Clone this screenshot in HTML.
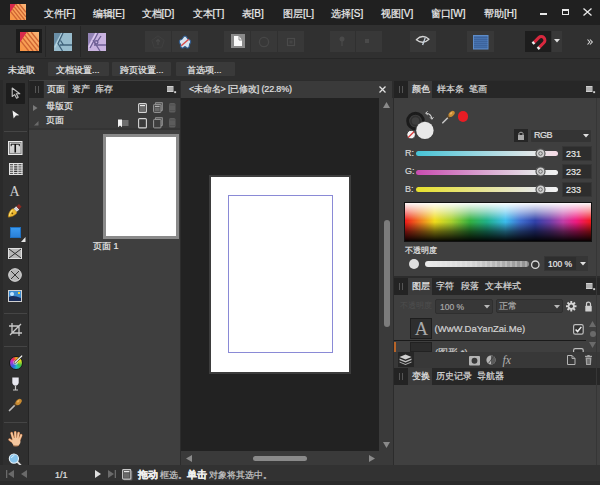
<!DOCTYPE html>
<html><head><meta charset="utf-8">
<style>
*{box-sizing:border-box;margin:0;padding:0}
html,body{width:600px;height:485px;overflow:hidden;background:#2b2b2b;font-family:"Liberation Sans",sans-serif;color:#d8d8d8;font-size:10px}
.a{position:absolute}
.t{position:absolute;white-space:nowrap;line-height:1;-webkit-text-stroke:0.2px currentColor}
svg{position:absolute;overflow:visible}
.mn{position:absolute;top:9px;font-size:10px;line-height:1;white-space:nowrap;color:#ececec;-webkit-text-stroke:0.2px currentColor}
.btn{position:absolute;background:#383838}
.cb{position:absolute;top:62px;height:14px;background:#3a3a3a;border-radius:1px}
.tab{position:absolute;font-size:8.5px;line-height:1;white-space:nowrap;color:#d8d8d8;-webkit-text-stroke:0.2px currentColor}
</style></head><body>
<!-- ================= MENU BAR ================= -->
<div class="a" style="left:0;top:0;width:600px;height:24.5px;background:#202020"></div>
<svg style="left:10px;top:4px;overflow:hidden" width="16" height="16" viewBox="0 0 19 19">
  <rect width="19" height="19" fill="url(#pg)"/>
  <polygon points="0,0 7,0 0,10.5" fill="#d82a4c"/>
  <g stroke="#cf6432" stroke-width="1.5">
    <line x1="11.1" y1="0" x2="19" y2="9.9"/><line x1="6.75" y1="0" x2="19" y2="15.4"/><line x1="4.9" y1="3.2" x2="17.5" y2="19"/><line x1="2.9" y1="6.2" x2="13.1" y2="19"/><line x1="0.9" y1="9.2" x2="8.7" y2="19"/>
  </g>
</svg>
<div class="mn" style="left:43.5px">文件[F]</div>
<div class="mn" style="left:92.5px">编辑[E]</div>
<div class="mn" style="left:141.5px">文档[D]</div>
<div class="mn" style="left:192.5px">文本[T]</div>
<div class="mn" style="left:241.5px">表[B]</div>
<div class="mn" style="left:283px">图层[L]</div>
<div class="mn" style="left:331px">选择[S]</div>
<div class="mn" style="left:381px">视图[V]</div>
<div class="mn" style="left:430.5px">窗口[W]</div>
<div class="mn" style="left:484px">帮助[H]</div>
<div class="a" style="left:540px;top:13px;width:7px;height:2px;background:#e8e8e8"></div>
<div class="a" style="left:562px;top:9px;width:7px;height:6px;border:1px solid #e8e8e8;border-top-width:2px"></div>
<svg style="left:583px;top:8px" width="9" height="8" viewBox="0 0 9 8"><path d="M0.5 0.5L8.5 7.5M8.5 0.5L0.5 7.5" stroke="#e8e8e8" stroke-width="1.3"/></svg>

<!-- ================= TOOLBAR ================= -->
<div class="a" style="left:0;top:24.5px;width:600px;height:34px;background:#303030"></div>
<div class="a" style="left:0;top:58px;width:600px;height:1px;background:#262626"></div>
<div class="a" style="left:16px;top:29px;width:26px;height:24px;background:#1c1c1c"></div>
<svg style="left:20px;top:32px;overflow:hidden" width="19" height="19" viewBox="0 0 19 19">
  <defs><linearGradient id="pg" x1="0" y1="1" x2="1" y2="0"><stop offset="0" stop-color="#f79342"/><stop offset="1" stop-color="#fbb476"/></linearGradient></defs>
  <rect width="19" height="19" fill="url(#pg)"/>
  <polygon points="0,0 7,0 0,10.5" fill="#d82a4c"/>
  <g stroke="#cf6432" stroke-width="1.35">
    <line x1="11.1" y1="0" x2="19" y2="9.9"/><line x1="6.75" y1="0" x2="19" y2="15.4"/><line x1="4.9" y1="3.2" x2="17.5" y2="19"/><line x1="2.9" y1="6.2" x2="13.1" y2="19"/><line x1="0.9" y1="9.2" x2="8.7" y2="19"/>
  </g>
</svg>
<svg style="left:54px;top:32.5px" width="18" height="18" viewBox="0 0 18 18">
  <rect width="18" height="18" fill="#98bccd"/>
  <polygon points="0,0 7,0 0,13" fill="#6a8fa7"/><path d="M8.2 0L0.8 14.5" stroke="#b8d6e2" stroke-width="1.2"/>
  <g stroke="#3f6179" stroke-width="1.3" fill="none">
    <path d="M9 0L4 10.5L8.5 18M6 12H18M6.5 7.5L9.5 12"/>
  </g>
</svg>
<svg style="left:88px;top:32.5px" width="18" height="18" viewBox="0 0 18 18">
  <rect width="18" height="18" fill="#c9b3e0"/>
  <polygon points="0,0 7,0 0,13" fill="#9484b6"/><path d="M8.2 0L0.8 14.5" stroke="#dccbee" stroke-width="1.2"/>
  <g stroke="#6e5f94" stroke-width="1.3" fill="none">
    <path d="M10 0L2 15M6 12H18M5 7L12 18M13 3L9 9"/>
    <circle cx="8.3" cy="9.3" r="1.6"/>
  </g>
</svg>
<div class="a" style="left:45px;top:26px;width:1px;height:31px;background:#262626"></div>
<div class="a" style="left:80px;top:26px;width:1px;height:31px;background:#262626"></div>
<!-- group1 -->
<div class="btn" style="left:145px;top:31px;width:26px;height:21px"></div>
<div class="btn" style="left:172px;top:31px;width:26px;height:21px"></div>
<svg style="left:151px;top:34.5px" width="14" height="14" viewBox="0 0 14 14"><path d="M7 0.8L13.2 5.3L10.8 12.8H3.2L0.8 5.3Z" fill="#393939" stroke="#404040" stroke-width="1"/><path d="M7 4.5V10M5 6.5L7 4.5L9 6.5" fill="none" stroke="#474747" stroke-width="1.1"/></svg>
<svg style="left:177.5px;top:34.5px" width="14" height="14" viewBox="0 0 14 14"><path d="M7 1C9 1 9 4 10.5 4.5C12.5 4.5 13.5 7 12 8.5C11 9.5 12 12.5 10 13C8.5 13.5 7.5 11.5 7 11.5C6.5 11.5 5.5 13.5 4 13C2 12.5 3 9.5 2 8.5C0.5 7 1.5 4.5 3.5 4.5C5 4 5 1 7 1Z" fill="#d6e4f0" stroke="#2f5a8e" stroke-width="1.1"/><path d="M3.2 10.8L10.8 4.2" stroke="#d84a48" stroke-width="1.5"/></svg>
<!-- group2 -->
<div class="btn" style="left:224px;top:31px;width:26px;height:21px"></div>
<div class="btn" style="left:251px;top:31px;width:26px;height:21px"></div>
<div class="btn" style="left:278px;top:31px;width:26px;height:21px"></div>
<div class="a" style="left:231px;top:34px;width:14px;height:14px;background:#8a8a8a"></div>
<svg style="left:233px;top:35px" width="10" height="12" viewBox="0 0 10 12"><path d="M1 1H6L9 5V11H1Z" fill="#fafafa"/><path d="M6 1V5H9" fill="none" stroke="#777" stroke-width="0.8"/></svg>
<svg style="left:258px;top:36px" width="12" height="12" viewBox="0 0 12 12"><circle cx="6" cy="6" r="4.6" fill="none" stroke="#474747" stroke-width="1.3"/></svg>
<svg style="left:285px;top:36px" width="12" height="12" viewBox="0 0 12 12"><rect x="2.5" y="2.5" width="7" height="7" fill="none" stroke="#4a4a4a" stroke-width="1.2"/><rect x="4.5" y="4.5" width="3" height="3" fill="#444"/></svg>
<!-- group3 -->
<div class="btn" style="left:330px;top:31px;width:25px;height:21px"></div>
<div class="btn" style="left:356px;top:31px;width:26px;height:21px"></div>
<svg style="left:337px;top:35px" width="10" height="12" viewBox="0 0 10 12"><circle cx="5" cy="4" r="2.5" fill="#4a4a4a"/><path d="M5 6V11" stroke="#4a4a4a" stroke-width="1.2"/></svg>
<div class="a" style="left:365px;top:39px;width:4px;height:4px;background:#4a4a4a"></div>
<!-- group4 eye -->
<div class="btn" style="left:410px;top:31px;width:26px;height:21px"></div>
<svg style="left:414px;top:33px" width="18" height="14" viewBox="0 0 18 14"><path d="M2.3 6.8Q8.5 0.6 15 6.2Q9 12 2.3 6.8Z" fill="none" stroke="#d4d4d4" stroke-width="1.3" stroke-linejoin="round"/><path d="M11.3 4.6L8.6 12" stroke="#c8d4e0" stroke-width="1.3"/></svg>
<!-- grid -->
<div class="btn" style="left:467px;top:31px;width:27px;height:21px"></div>
<svg style="left:472.5px;top:34.5px" width="15.5" height="14.5" viewBox="0 0 15.5 14.5"><rect x="0.5" y="0.5" width="14.5" height="13.5" fill="#4671ad" stroke="#5e8cc8"/><g stroke="#375d92" stroke-width="0.6"><path d="M1 2.5H14.5M1 4.5H14.5M1 6.5H14.5M1 8.5H14.5M1 10.5H14.5M1 12.3H14.5"/></g></svg>
<!-- magnet -->
<div class="a" style="left:525px;top:31px;width:26px;height:21px;background:#1d1d1d"></div>
<div class="btn" style="left:552px;top:31px;width:10px;height:21px"></div>
<svg style="left:528px;top:32px" width="20" height="20" viewBox="0 0 20 20"><g transform="translate(13.3 8.2) rotate(45)"><path d="M-3.6 6.6V0A3.6 3.6 0 0 1 3.6 0V6.6" fill="none" stroke="#d8283e" stroke-width="3"/><path d="M-3.6 6.4V8.6M3.6 6.4V8.6" stroke="#eeeeee" stroke-width="3"/></g></svg>
<svg style="left:554px;top:39px" width="6" height="4" viewBox="0 0 6 4"><path d="M0 0H6L3 3.5Z" fill="#e0e0e0"/></svg>
<svg style="left:587px;top:38.5px" width="6" height="6" viewBox="0 0 6 6"><path d="M0.5 0.5L2.8 3L0.5 5.5M3 0.5L5.3 3L3 5.5" fill="none" stroke="#d8d8d8" stroke-width="1.1"/></svg>

<!-- ================= CONTEXT BAR ================= -->
<div class="a" style="left:0;top:59px;width:600px;height:21px;background:#2e2e2e"></div>
<div class="a" style="left:0;top:80px;width:600px;height:1px;background:#222"></div>
<div class="t" style="left:8px;top:65.5px;font-size:9px;color:#e6e6e6">未选取</div>
<div class="cb" style="left:48px;width:61px"></div>
<div class="t" style="left:56px;top:65.5px;font-size:9px;color:#e6e6e6">文档设置...</div>
<div class="cb" style="left:112px;width:59px"></div>
<div class="t" style="left:120px;top:65.5px;font-size:9px;color:#e6e6e6">跨页设置...</div>
<div class="cb" style="left:176px;width:59px"></div>
<div class="t" style="left:187px;top:65.5px;font-size:9px;color:#e6e6e6">首选项...</div>


<!-- ================= LEFT TOOLS ================= -->
<div class="a" style="left:0;top:80px;width:29px;height:385px;background:#2a2a2a"></div>
<div class="a" style="left:3px;top:80px;width:25px;height:385px;background:#2f2f2f"></div>
<div class="a" style="left:28px;top:80px;width:1.5px;height:385px;background:#252525"></div>
<div class="a" style="left:5.5px;top:83px;width:19.5px;height:20.5px;background:#1d1d1d;border-radius:1px"></div>
<svg style="left:11px;top:87px" width="10" height="12" viewBox="0 0 10 12"><path d="M1.2 1V9.5L3.6 7.6L5.6 11.2L7.2 10.3L5.3 6.8H8.8Z" fill="#1d1d1d" stroke="#c4c4c4" stroke-width="1.1" stroke-linejoin="round"/></svg>
<svg style="left:12px;top:110px" width="8" height="9" viewBox="0 0 8 9"><path d="M0.5 0.5L7.3 5.3L4 5.6L1.6 8.6Z" fill="#f2f2f2"/></svg>
<div class="a" style="left:4px;top:131px;width:23px;height:1px;background:#454545"></div>
<!-- text frame -->
<svg style="left:8px;top:141px" width="14.5" height="14" viewBox="0 0 14.5 14"><defs><linearGradient id="tg" x1="0" y1="0" x2="0" y2="1"><stop offset="0" stop-color="#e6e6e6"/><stop offset="1" stop-color="#c4c4c4"/></linearGradient></defs><rect x="0.5" y="0.5" width="13.5" height="13" fill="url(#tg)" stroke="#e8e8e8"/><rect x="1.5" y="1.5" width="11.5" height="11" fill="none" stroke="#808080" stroke-width="0.9"/><path d="M3 3.2H11.5M3.2 3V5.2M11.3 3V5.2" stroke="#1a1a1a" stroke-width="1"/><path d="M7.25 3V11.5" stroke="#111" stroke-width="1.6"/></svg>
<!-- table -->
<svg style="left:8.5px;top:163px" width="13.5" height="12" viewBox="0 0 13.5 12"><rect x="0" y="0" width="13.5" height="12" fill="#5a5a5a"/><rect x="4.6" y="3" width="4.3" height="6" fill="#222"/><g stroke="#e4e4e4" stroke-width="1"><path d="M0.5 0V12M4.6 0V12M8.9 0V12M13 0V12M0 0.5H13.5M0 2.8H13.5M0 5H13.5M0 7.2H13.5M0 9.4H13.5M0 11.5H13.5"/></g></svg>
<!-- artistic text -->
<div class="t" style="left:9.5px;top:184.5px;font-family:'Liberation Serif',serif;font-size:14px;color:#d0d0d0;-webkit-text-stroke:0">A</div>
<!-- pen -->
<svg style="left:4px;top:200px" width="22" height="20" viewBox="0 0 22 20"><g transform="translate(4.2 17.1) rotate(-44)">
 <path d="M0 0Q3 -3.4 8.2 -3.3L9.8 -2.4V2.4L8.2 3.3Q3 3.4 0 0Z" fill="#ecb832" stroke="#9a6a14" stroke-width="0.5"/>
 <path d="M1.5 -0.2Q4.5 -2.2 8 -2.2" stroke="#fde47a" stroke-width="1" fill="none"/>
 <circle cx="5.6" cy="0.2" r="0.9" fill="#6a4a08"/>
 <rect x="9.8" y="-2.2" width="3.4" height="4.4" fill="#f2f2f2"/>
 <path d="M10.9 -2.2V2.2M12.1 -2.2V2.2" stroke="#999" stroke-width="0.5"/>
 <rect x="13.2" y="-1.9" width="3.6" height="3.8" fill="#8a2a22"/>
</g></svg>
<!-- rect -->
<div class="a" style="left:10px;top:227px;width:11px;height:11px;background:linear-gradient(#3a9af0,#2a80d8);border:1px solid #2070c0"></div>
<svg style="left:20.5px;top:237px" width="4.5" height="5" viewBox="0 0 4.5 5"><path d="M4.5 0V5H0Z" fill="#e6e6e6"/></svg>
<!-- picture frame -->
<svg style="left:8px;top:248px" width="14" height="11" viewBox="0 0 14 11"><rect x="0.5" y="0.5" width="13" height="10" fill="#b8b8b8" stroke="#e0e0e0"/><path d="M1 1L13 10M13 1L1 10" stroke="#333" stroke-width="1"/></svg>
<!-- ellipse frame -->
<svg style="left:8px;top:268px" width="14" height="14" viewBox="0 0 14 14"><circle cx="7" cy="7" r="6.3" fill="#b5b5b5" stroke="#dedede" stroke-width="1"/><path d="M3 3L11 11M11 3L3 11" stroke="#333" stroke-width="1"/></svg>
<!-- image -->
<svg style="left:8px;top:290px" width="14" height="12" viewBox="0 0 14 12"><rect x="0.5" y="0.5" width="13" height="11" fill="#3a8ad0" stroke="#d0d0d0"/><path d="M1 7C4 5 8 6 13 8V11H1Z" fill="#1a2d5a"/><circle cx="4" cy="4" r="2" fill="#bfe3ff"/><rect x="10" y="2" width="2" height="2" fill="#f0d040"/></svg>
<div class="a" style="left:4px;top:313px;width:23px;height:1px;background:#454545"></div>
<!-- crop -->
<svg style="left:9px;top:323px" width="14" height="13" viewBox="0 0 14 13"><path d="M3 0V10H13M0 3H10V13M1 12L12 1" fill="none" stroke="#c8c8c8" stroke-width="1.3"/></svg>
<div class="a" style="left:4px;top:346px;width:23px;height:1px;background:#454545"></div>
<!-- color wheel -->
<div class="a" style="left:8.5px;top:355.5px;width:14px;height:14px;border-radius:50%;background:conic-gradient(from 0deg,#f0a020,#e8e020 60deg,#40c040 120deg,#20c0c0 170deg,#3060e0 220deg,#c030d0 290deg,#f03050 330deg,#f0a020);border:1px solid #1a1a1a"></div>
<div class="a" style="left:13px;top:360px;width:5px;height:5px;border-radius:50%;background:radial-gradient(#e8e8e8,rgba(230,230,230,0.2))"></div>
<svg style="left:13px;top:355px" width="10" height="10" viewBox="0 0 10 10"><path d="M2 7.5L8.8 1" stroke="#222" stroke-width="2.4" stroke-linecap="round"/><path d="M2 7.5L8.8 1" stroke="#f2f2f2" stroke-width="1.2" stroke-linecap="round"/></svg>
<!-- transparency glass -->
<svg style="left:11.5px;top:377px" width="7" height="14" viewBox="0 0 7 14"><path d="M0.3 0.5H6.7V5.5C6.7 7.6 5.2 8.6 3.5 8.6C1.8 8.6 0.3 7.6 0.3 5.5Z" fill="#e8e8f0"/><path d="M3.5 8.6V12.6M1 13H6" stroke="#c8c8c8" stroke-width="1.2"/></svg>
<!-- eyedropper -->
<svg style="left:8px;top:398px" width="15" height="14" viewBox="0 0 15 14"><path d="M1.5 12.5L7.5 6.5" stroke="#bdbdbd" stroke-width="1.7" stroke-linecap="round"/><path d="M6 5.6L8.4 8" stroke="#5a4020" stroke-width="1.5"/><ellipse cx="10.6" cy="3.9" rx="3.6" ry="2.5" transform="rotate(-45 10.6 3.9)" fill="#c88a30"/><ellipse cx="10.2" cy="3.3" rx="1.5" ry="0.9" transform="rotate(-45 10.2 3.3)" fill="#e8b060"/></svg>
<div class="a" style="left:4px;top:422px;width:23px;height:1px;background:#454545"></div>
<!-- hand -->
<svg style="left:8px;top:431px" width="15" height="16" viewBox="0 0 15 16">
 <g stroke="#c87a48" stroke-width="2.6" stroke-linecap="round" fill="none">
  <path d="M5.5 8.5L3.6 2.2"/><path d="M7.6 8L7.2 1.4"/><path d="M9.6 8.2L10.6 2"/><path d="M11.2 9L13.2 4.2"/><path d="M5 11L1.6 8.6"/>
 </g>
 <g stroke="#f4c69e" stroke-width="1.7" stroke-linecap="round" fill="none">
  <path d="M5.5 8.5L3.6 2.2"/><path d="M7.6 8L7.2 1.4"/><path d="M9.6 8.2L10.6 2"/><path d="M11.2 9L13.2 4.2"/><path d="M5 11L1.6 8.6"/>
 </g>
 <ellipse cx="8.2" cy="10.8" rx="4.3" ry="4" fill="#f4c69e"/>
 <path d="M5 14.5C6.5 15.3 9.5 15.3 11 14.2" stroke="#d08a58" stroke-width="0.8" fill="none"/>
</svg>
<!-- zoom -->
<svg style="left:8px;top:453px" width="14" height="13" viewBox="0 0 14 13"><path d="M9 8.5L12.8 12.3" stroke="#d8d8d8" stroke-width="1.8" stroke-linecap="round"/><circle cx="5.9" cy="5.6" r="4.6" fill="#86c4ec" stroke="#e6f2fa" stroke-width="1.1"/><path d="M3.5 5C3.8 3.6 5 2.7 6.3 2.7" stroke="#e8f6ff" stroke-width="1" fill="none"/></svg>

<!-- ================= PAGES PANEL ================= -->
<div class="a" style="left:29px;top:80px;width:151px;height:385px;background:#3f3f3f"></div>
<div class="a" style="left:29px;top:81px;width:151px;height:17px;background:#272727"></div>
<div class="a" style="left:30px;top:81px;width:13px;height:17px;background:#232323"></div>
<div class="a" style="left:35px;top:86px;width:1px;height:7px;background:#555"></div>
<div class="a" style="left:38px;top:86px;width:1px;height:7px;background:#555"></div>
<div class="a" style="left:44px;top:81px;width:24px;height:17px;background:#3b3b3b"></div>
<div class="tab" style="left:46.5px;top:85px;color:#e8e8e8">页面</div>
<div class="tab" style="left:71.5px;top:85px">资产</div>
<div class="tab" style="left:95px;top:85px;letter-spacing:0.3px">库存</div>
<svg style="left:167px;top:86px" width="10" height="9" viewBox="0 0 10 9"><rect x="0" y="0" width="6.5" height="6" fill="#d0d0d0"/><path d="M0 2H6.5M0 4H6.5" stroke="#666" stroke-width="0.6"/><rect x="7.2" y="5.2" width="1.9" height="1.9" fill="#d0d0d0"/></svg>
<div class="a" style="left:29px;top:98px;width:151px;height:30px;background:#3a3a3a"></div>
<div class="a" style="left:29px;top:128px;width:151px;height:1.5px;background:#343434"></div>
<svg style="left:33px;top:104.5px" width="4.5" height="6" viewBox="0 0 4.5 6"><path d="M0 0L4.5 3L0 6Z" fill="#7a7a7a"/></svg>
<svg style="left:33.5px;top:121px" width="4.5" height="4.5" viewBox="0 0 4.5 4.5"><path d="M4.5 0V4.5H0Z" fill="#6a6a6a"/></svg>
<div class="t" style="left:45.5px;top:101.5px;font-size:9px;color:#e6e6e6">母版页</div>
<div class="t" style="left:45.5px;top:116px;font-size:9px;color:#e6e6e6">页面</div>
<!-- row icons -->
<svg style="left:137.5px;top:102.5px" width="9" height="10" viewBox="0 0 9 10"><rect x="0.6" y="0.6" width="7.8" height="8.8" rx="1" fill="#4a4a4a" stroke="#d4d4d4" stroke-width="1.1"/><rect x="2" y="2" width="5" height="1.3" fill="#e8e8e8"/><rect x="2" y="4" width="5" height="4" fill="#6a6a6a"/></svg>
<svg style="left:153px;top:101.5px" width="10" height="11" viewBox="0 0 10 11"><path d="M2.5 2V0.6H9.4V8.5H8" fill="#555" stroke="#8a8a8a" stroke-width="1"/><rect x="0.6" y="2.4" width="7.4" height="8" rx="0.8" fill="#4a4a4a" stroke="#9a9a9a" stroke-width="1"/><rect x="2" y="3.8" width="4.6" height="1.2" fill="#b0b0b0"/><rect x="2" y="5.6" width="4.6" height="3.4" fill="#6a6a6a"/></svg>
<svg style="left:169px;top:102.5px" width="6.5" height="9.5" viewBox="0 0 6.5 9.5"><rect x="0" y="0" width="6.5" height="9.5" rx="1.6" fill="#5c5c5c"/><path d="M0.5 2H6M0.5 7.5H6" stroke="#4a4a4a" stroke-width="0.6"/></svg>
<svg style="left:116.5px;top:118.5px" width="12" height="8.5" viewBox="0 0 12 8.5"><rect x="5" y="1" width="6.5" height="6" fill="#6e6e6e"/><path d="M1 0.5H5V8.2L3 6.5L1 8.2Z" fill="#f2f2f2"/></svg>
<svg style="left:137.5px;top:117.5px" width="9" height="10.5" viewBox="0 0 9 10.5"><rect x="0.6" y="0.6" width="7.8" height="9.3" rx="1" fill="#3a3a3a" stroke="#d4d4d4" stroke-width="1.1"/></svg>
<svg style="left:153px;top:116.5px" width="10" height="11.5" viewBox="0 0 10 11.5"><path d="M2.5 2V0.6H9.4V8.5H8" fill="#555" stroke="#8a8a8a" stroke-width="1"/><rect x="0.6" y="2.4" width="7.4" height="8.5" rx="0.8" fill="#3e3e3e" stroke="#9a9a9a" stroke-width="1"/></svg>
<svg style="left:169px;top:117.5px" width="6.5" height="9.5" viewBox="0 0 6.5 9.5"><rect x="0" y="0" width="6.5" height="9.5" rx="1.6" fill="#5c5c5c"/><path d="M0.5 2H6M0.5 7.5H6" stroke="#4a4a4a" stroke-width="0.6"/></svg>
<!-- thumbnail -->
<div class="a" style="left:103px;top:134px;width:76px;height:105px;background:#8a8a8a"></div>
<div class="a" style="left:106px;top:137px;width:70px;height:99px;background:#ffffff"></div>
<div class="t" style="left:93px;top:241.5px;font-size:9px;color:#e6e6e6">页面 1</div>


<!-- ================= CANVAS ================= -->
<div class="a" style="left:180px;top:80px;width:213px;height:385px;background:#2c2c2c"></div>
<div class="a" style="left:181px;top:81px;width:211px;height:17px;background:#3a3a3a"></div>
<div class="t" style="left:189px;top:85px;font-size:9px;letter-spacing:-0.17px;color:#e0e0e0">&lt;未命名&gt; [已修改] (22.8%)</div>
<svg style="left:379px;top:86px" width="7" height="7" viewBox="0 0 7 7"><path d="M0.5 0.5L6.5 6.5M6.5 0.5L0.5 6.5" stroke="#e0e0e0" stroke-width="1.3"/></svg>
<div class="a" style="left:181px;top:98px;width:198px;height:353px;background:#222222"></div>
<!-- vscroll -->
<div class="a" style="left:379px;top:98px;width:14px;height:367px;background:#3a3a3a"></div>
<svg style="left:383px;top:102px" width="7" height="6" viewBox="0 0 7 6"><path d="M3.5 0L7 6H0Z" fill="#8a8a8a"/></svg>
<svg style="left:383px;top:442px" width="7" height="6" viewBox="0 0 7 6"><path d="M0 0H7L3.5 6Z" fill="#8a8a8a"/></svg>
<div class="a" style="left:383.5px;top:220px;width:6px;height:107px;background:#7c7c7c;border-radius:3px"></div>
<!-- hscroll -->
<div class="a" style="left:181px;top:451px;width:198px;height:14px;background:#3a3a3a"></div>
<svg style="left:186px;top:455px" width="6" height="7" viewBox="0 0 6 7"><path d="M6 0V7L0 3.5Z" fill="#8a8a8a"/></svg>
<svg style="left:369px;top:455px" width="6" height="7" viewBox="0 0 6 7"><path d="M0 0V7L6 3.5Z" fill="#8a8a8a"/></svg>
<div class="a" style="left:253px;top:456px;width:54px;height:5px;background:#8a8a8a;border-radius:3px"></div>
<!-- page -->
<div class="a" style="left:209px;top:175px;width:142px;height:199px;background:#3d3d3d"></div>
<div class="a" style="left:211px;top:177px;width:138px;height:195px;background:#ffffff"></div>
<div class="a" style="left:228px;top:195px;width:105px;height:158px;border:1px solid #8a8ad6"></div>

<!-- ================= RIGHT PANEL ================= -->
<div class="a" style="left:393px;top:80px;width:207px;height:385px;background:#2c2c2c"></div>
<div class="a" style="left:394px;top:98px;width:206px;height:178px;background:#3f3f3f"></div>
<div class="a" style="left:394px;top:81px;width:206px;height:17px;background:#272727"></div>
<div class="a" style="left:394px;top:81px;width:14px;height:17px;background:#232323"></div>
<div class="a" style="left:399px;top:86px;width:1px;height:7px;background:#555"></div>
<div class="a" style="left:402px;top:86px;width:1px;height:7px;background:#555"></div>
<div class="a" style="left:408px;top:81px;width:24px;height:17px;background:#3b3b3b"></div>
<div class="tab" style="left:411.5px;top:85px;color:#e8e8e8">颜色</div>
<div class="tab" style="left:436.5px;top:85px">样本条</div>
<div class="tab" style="left:469px;top:85px">笔画</div>
<svg style="left:586.2px;top:85.5px" width="10" height="9" viewBox="0 0 10 9"><rect x="0" y="0" width="6.5" height="6" fill="#d0d0d0"/><path d="M0 2H6.5M0 4H6.5" stroke="#666" stroke-width="0.6"/><rect x="7.2" y="5.2" width="1.9" height="1.9" fill="#d0d0d0"/></svg>
<!-- color wells -->
<svg style="left:400px;top:104px" width="40" height="40" viewBox="0 0 40 40">
  <circle cx="15.5" cy="17" r="7.8" fill="none" stroke="#1b1b1b" stroke-width="3"/>
  <circle cx="15.5" cy="17" r="4.6" fill="none" stroke="#303030" stroke-width="1.6"/>
  <circle cx="24.9" cy="26.4" r="9.6" fill="#3f3f3f"/>
  <circle cx="24.9" cy="26.4" r="8.7" fill="#e8e8e8"/>
  <circle cx="11.1" cy="30.6" r="4.3" fill="#f2f2f2" stroke="#262626" stroke-width="0.9"/>
  <path d="M8.2 33.5L14 27.7" stroke="#d83a3a" stroke-width="1.3"/>
  <path d="M26.3 9.2C29 9.2 31.5 11.5 31.8 14.6" fill="none" stroke="#cfcfcf" stroke-width="1.1"/>
  <path d="M25.6 9.2L27.6 7.4M25.6 9.2L27.8 10.9M31.9 15.3L30.1 13.4M31.9 15.3L33.4 13.2" stroke="#cfcfcf" stroke-width="1"/>
</svg>
<svg style="left:441px;top:109.5px" width="15" height="14" viewBox="0 0 15 14"><path d="M1.8 12.8L7.6 7" stroke="#c4c4c4" stroke-width="1.6" stroke-linecap="round"/><path d="M6.1 6L8.5 8.4" stroke="#5a4020" stroke-width="1.5"/><ellipse cx="10.6" cy="3.9" rx="3.6" ry="2.4" transform="rotate(-45 10.6 3.9)" fill="#c98c32"/><ellipse cx="10.1" cy="3.3" rx="1.5" ry="0.9" transform="rotate(-45 10.1 3.3)" fill="#e8b264"/></svg>
<div class="a" style="left:457.5px;top:111px;width:10.5px;height:10.5px;border-radius:50%;background:#e81c24"></div>
<!-- lock + dropdown -->
<div class="a" style="left:514px;top:129px;width:14px;height:13px;background:#262626"></div>
<svg style="left:517px;top:131px" width="8" height="9" viewBox="0 0 8 9"><path d="M2 4V2.5C2 0.8 6 0.8 6 2.5V4" fill="none" stroke="#a8a8a8" stroke-width="1"/><rect x="1" y="4" width="6" height="5" fill="#a8a8a8"/></svg>
<div class="a" style="left:531px;top:130px;width:60px;height:12px;background:#343434;border-radius:1px"></div>
<div class="t" style="left:534px;top:131px;font-size:9px;letter-spacing:-0.5px;color:#e0e0e0">RGB</div>
<svg style="left:583px;top:134px" width="6" height="4" viewBox="0 0 6 4"><path d="M0 0H6L3 3.5Z" fill="#e0e0e0"/></svg>
<!-- sliders -->
<div class="t" style="left:405px;top:149px;font-size:9px;color:#d8d8d8">R:</div>
<div class="t" style="left:405px;top:167px;font-size:9px;color:#d8d8d8">G:</div>
<div class="t" style="left:405px;top:185px;font-size:9px;color:#d8d8d8">B:</div>
<div class="a" style="left:416px;top:151px;width:142px;height:5px;border-radius:3px;background:linear-gradient(90deg,#46c3d6,#e7e8e9 85%,#f6d8e4)"></div>
<div class="a" style="left:416px;top:169.5px;width:142px;height:5px;border-radius:3px;background:linear-gradient(90deg,#c84cb0,#e7e8e9 85%,#f2f2f2)"></div>
<div class="a" style="left:416px;top:187px;width:142px;height:5px;border-radius:3px;background:linear-gradient(90deg,#e6e02a,#e7e8e9 85%,#f2f2f2)"></div>
<svg style="left:535px;top:148px" width="11" height="11" viewBox="0 0 11 11"><circle cx="5.5" cy="5.5" r="4.5" fill="#cfcfcf" stroke="#555" stroke-width="1.2"/><circle cx="5.5" cy="5.5" r="1.8" fill="none" stroke="#555" stroke-width="0.8"/></svg>
<svg style="left:535px;top:166px" width="11" height="11" viewBox="0 0 11 11"><circle cx="5.5" cy="5.5" r="4.5" fill="#cfcfcf" stroke="#555" stroke-width="1.2"/><circle cx="5.5" cy="5.5" r="1.8" fill="none" stroke="#555" stroke-width="0.8"/></svg>
<svg style="left:535px;top:184px" width="11" height="11" viewBox="0 0 11 11"><circle cx="5.5" cy="5.5" r="4.5" fill="#cfcfcf" stroke="#555" stroke-width="1.2"/><circle cx="5.5" cy="5.5" r="1.8" fill="none" stroke="#555" stroke-width="0.8"/></svg>
<div class="a" style="left:561.5px;top:146px;width:30.5px;height:14.5px;background:#2d2d2d;border:1px solid #363636"></div>
<div class="a" style="left:561.5px;top:164px;width:30.5px;height:14.5px;background:#2d2d2d;border:1px solid #363636"></div>
<div class="a" style="left:561.5px;top:182px;width:30.5px;height:14.5px;background:#2d2d2d;border:1px solid #363636"></div>
<div class="t" style="left:566px;top:150px;font-size:9px;color:#e8e8e8">231</div>
<div class="t" style="left:566px;top:168px;font-size:9px;color:#e8e8e8">232</div>
<div class="t" style="left:566px;top:186px;font-size:9px;color:#e8e8e8">233</div>
<!-- spectrum -->
<div class="a" style="left:404px;top:202px;width:188px;height:40px;background:#111"></div>
<div class="a" style="left:405px;top:203px;width:186px;height:38px;background:linear-gradient(180deg,rgba(255,255,255,0.97) 0%,rgba(255,255,255,0.55) 22%,rgba(255,255,255,0) 46%,rgba(0,0,0,0) 50%,rgba(0,0,0,0.55) 75%,rgba(0,0,0,0.96) 100%),linear-gradient(90deg,#f01a1a 0%,#f07a20 8%,#f0dc1c 16%,#a8d030 25%,#34b040 35%,#20b08a 44%,#3cbcec 54%,#4070d0 62%,#3040a8 70%,#7040a8 78%,#c040a8 85%,#f01a80 92%,#f01a1a 100%)"></div>
<div class="t" style="left:405px;top:246.5px;font-size:8px;color:#e0e0e0">不透明度</div>
<div class="a" style="left:409px;top:259px;width:10px;height:10px;border-radius:50%;background:#e0e0e0"></div>
<div class="a" style="left:425px;top:261px;width:103.5px;height:6px;border-radius:3px;background:linear-gradient(90deg,rgba(236,236,236,1),rgba(236,236,236,0.8) 45%,rgba(236,236,236,0.15) 100%),repeating-linear-gradient(90deg,#9c9c9c 0 2.5px,#7c7c7c 2.5px 5px)"></div>
<svg style="left:530px;top:258.5px" width="11" height="11" viewBox="0 0 11 11"><circle cx="5.3" cy="5.7" r="3.7" fill="#353535" stroke="#d8d8d8" stroke-width="1.3"/></svg>
<div class="a" style="left:543.5px;top:256px;width:33px;height:14.5px;background:#2e2e2e;border:1px solid #353535"></div>
<div class="a" style="left:576.5px;top:256px;width:11.5px;height:14.5px;background:#363636"></div>
<div class="t" style="left:548px;top:260px;font-size:8.5px;color:#e8e8e8">100 %</div>
<svg style="left:580px;top:262px" width="6" height="4" viewBox="0 0 6 4"><path d="M0 0H6L3 3.5Z" fill="#e0e0e0"/></svg>

<!-- layers panel -->
<div class="a" style="left:394px;top:278px;width:206px;height:17px;background:#272727"></div>
<div class="a" style="left:394px;top:278px;width:14px;height:17px;background:#232323"></div>
<div class="a" style="left:399px;top:283px;width:1px;height:7px;background:#555"></div>
<div class="a" style="left:402px;top:283px;width:1px;height:7px;background:#555"></div>
<div class="a" style="left:408px;top:278px;width:24px;height:17px;background:#3b3b3b"></div>
<div class="tab" style="left:411.5px;top:282px;color:#e8e8e8">图层</div>
<div class="tab" style="left:436px;top:282px">字符</div>
<div class="tab" style="left:460.5px;top:282px">段落</div>
<div class="tab" style="left:484.5px;top:282px">文本样式</div>
<svg style="left:586px;top:282.5px" width="10" height="9" viewBox="0 0 10 9"><rect x="0" y="0" width="6.5" height="6" fill="#d0d0d0"/><path d="M0 2H6.5M0 4H6.5" stroke="#666" stroke-width="0.6"/><rect x="7.2" y="5.2" width="1.9" height="1.9" fill="#d0d0d0"/></svg>
<div class="a" style="left:394px;top:295px;width:206px;height:22px;background:#3f3f3f"></div>
<div class="t" style="left:400px;top:302px;font-size:7.5px;color:#4e4e4e;-webkit-text-stroke:0">不透明度</div>
<div class="a" style="left:435px;top:299px;width:57.5px;height:15px;background:#373737;border:1px solid #2f2f2f;border-radius:2px"></div>
<div class="t" style="left:440px;top:302.5px;font-size:8.5px;color:#a8a8a8">100 %</div>
<svg style="left:483.5px;top:305px" width="6" height="4" viewBox="0 0 6 4"><path d="M0 0H6L3 3.5Z" fill="#b8b8b8"/></svg>
<div class="a" style="left:496px;top:299px;width:66.5px;height:14px;background:#373737;border:1px solid #2f2f2f;border-radius:2px"></div>
<div class="t" style="left:498.5px;top:301.5px;font-size:8.5px;color:#a8a8a8">正常</div>
<svg style="left:553.5px;top:304.5px" width="6" height="4" viewBox="0 0 6 4"><path d="M0 0H6L3 3.5Z" fill="#b8b8b8"/></svg>
<svg style="left:566px;top:300.5px" width="10.5" height="10.5" viewBox="0 0 12 12"><g fill="#d4d4d4"><circle cx="6" cy="6" r="4"/><rect x="4.9" y="0" width="2.2" height="12"/><rect x="0" y="4.9" width="12" height="2.2"/><rect x="4.9" y="0" width="2.2" height="12" transform="rotate(45 6 6)"/><rect x="4.9" y="0" width="2.2" height="12" transform="rotate(-45 6 6)"/></g><circle cx="6" cy="6" r="2" fill="#3f3f3f"/></svg>
<svg style="left:584.5px;top:300.5px" width="7" height="10.5" viewBox="0 0 7 10.5"><path d="M1.5 5V3C1.5 0.6 5.5 0.6 5.5 3V5" fill="none" stroke="#d0d0d0" stroke-width="1.2"/><rect x="0.3" y="4.8" width="6.4" height="5.7" rx="0.6" fill="#d0d0d0"/></svg>
<!-- layer rows -->
<div class="a" style="left:394px;top:317px;width:192px;height:23px;background:#3f3f3f"></div>
<div class="a" style="left:394px;top:340px;width:192px;height:1px;background:#1a1a1a"></div>
<div class="a" style="left:394px;top:341px;width:192px;height:11px;background:#3f3f3f"></div>
<div class="a" style="left:394px;top:342px;width:2px;height:10px;background:#b86428"></div>
<div class="a" style="left:410px;top:318px;width:22px;height:21px;background:#2e2e2e;border:1px solid #1e1e1e"></div>
<div class="t" style="left:411px;top:320px;width:21px;text-align:center;font-family:'Liberation Serif',serif;font-size:18.5px;color:#aaaaaa;-webkit-text-stroke:0">A</div>
<div class="a" style="left:410px;top:342px;width:22px;height:10px;background:#2c2c2c;border:1px solid #222"></div>
<div class="t" style="left:434.5px;top:323.5px;font-size:9.5px;color:#d4d4d4">(WwW.DaYanZai.Me)</div>
<div class="t" style="left:435px;top:347.5px;font-size:9.5px;color:#c8c8c8">(图形 *)</div>
<svg style="left:572.8px;top:323.6px" width="10.8" height="10.8" viewBox="0 0 10.8 10.8"><rect x="0.6" y="0.6" width="9.6" height="9.6" rx="1.6" fill="#333" stroke="#bdbdbd" stroke-width="1.2"/><path d="M2.6 5.4L4.6 7.5L8.3 2.9" fill="none" stroke="#f0f0f0" stroke-width="1.5"/></svg>
<svg style="left:572.8px;top:348px" width="10.8" height="4" viewBox="0 0 10.8 4"><rect x="0.6" y="0.6" width="9.6" height="9.6" rx="1.6" fill="#333" stroke="#bdbdbd" stroke-width="1.2"/></svg>
<div class="a" style="left:586px;top:317px;width:14px;height:35px;background:#3f3f3f"></div>
<svg style="left:589px;top:321px" width="7" height="6" viewBox="0 0 7 6"><path d="M3.5 0L7 6H0Z" fill="#6a6a6a"/></svg>
<div class="a" style="left:589.5px;top:331px;width:6px;height:6px;border-radius:50%;background:#6a6a6a"></div>
<svg style="left:589px;top:342px" width="7" height="6" viewBox="0 0 7 6"><path d="M0 0H7L3.5 6Z" fill="#6a6a6a"/></svg>
<!-- layers bottom toolbar -->
<div class="a" style="left:394px;top:352px;width:206px;height:16px;background:#383838"></div>
<div class="a" style="left:398px;top:352px;width:16px;height:15px;background:#262626"></div>
<svg style="left:399px;top:354px" width="13" height="11" viewBox="0 0 13 11"><path d="M0.5 3L6.5 0.5L12.5 3L6.5 5.5Z" fill="#d0d0d0"/><path d="M0.5 4.6L6.5 7.1L12.5 4.6V6.1L6.5 8.6L0.5 6.1Z" fill="#c0c0c0"/><path d="M0.5 7.6L6.5 10.1L12.5 7.6V8.6L6.5 11L0.5 8.6Z" fill="#b0b0b0"/></svg>
<svg style="left:469px;top:355.5px" width="11" height="9.5" viewBox="0 0 11 9.5"><rect x="0" y="0" width="11" height="9.5" rx="1" fill="#b4b4b4"/><circle cx="5.5" cy="4.75" r="2.9" fill="#383838"/></svg>
<svg style="left:485.5px;top:355px" width="10" height="10" viewBox="0 0 10 10"><circle cx="5" cy="5" r="4.6" fill="#b4b4b4"/><path d="M5 0.4A4.6 4.6 0 0 1 5 9.6Z" fill="#5a5a5a"/><path d="M2.3 8.6L7.8 1.2" stroke="#383838" stroke-width="0.8"/></svg>
<div class="t" style="left:502.5px;top:353.5px;font-family:'Liberation Serif',serif;font-style:italic;font-size:12px;color:#b0b0b0;-webkit-text-stroke:0">fx</div>
<svg style="left:566.5px;top:355px" width="8.5" height="10" viewBox="0 0 8.5 10"><path d="M0.5 0.5H5L8 3.5V9.5H0.5Z" fill="none" stroke="#b4b4b4" stroke-width="1"/><path d="M5 0.5V3.5H8" fill="none" stroke="#b4b4b4" stroke-width="0.9"/></svg>
<svg style="left:584.5px;top:355px" width="7" height="10" viewBox="0 0 7 10"><rect x="0" y="0.8" width="7" height="1.2" fill="#a8a8a8"/><rect x="2.3" y="0" width="2.4" height="1" fill="#a8a8a8"/><path d="M0.6 2.6H6.4L5.9 10H1.1Z" fill="#a8a8a8"/><path d="M2.4 3.8V9M3.5 3.8V9M4.6 3.8V9" stroke="#383838" stroke-width="0.5"/></svg>
<!-- transform panel -->
<div class="a" style="left:394px;top:368px;width:206px;height:17px;background:#272727"></div>
<div class="a" style="left:394px;top:368px;width:14px;height:17px;background:#232323"></div>
<div class="a" style="left:399px;top:373px;width:1px;height:7px;background:#555"></div>
<div class="a" style="left:402px;top:373px;width:1px;height:7px;background:#555"></div>
<div class="a" style="left:408px;top:368px;width:24px;height:17px;background:#3b3b3b"></div>
<div class="tab" style="left:411.5px;top:372px;color:#e8e8e8">变换</div>
<div class="tab" style="left:435.5px;top:372px">历史记录</div>
<div class="tab" style="left:477px;top:372px">导航器</div>
<div class="a" style="left:394px;top:385px;width:206px;height:80px;background:#404040"></div>
<div class="a" style="left:596px;top:98px;width:1px;height:367px;background:#363636"></div>

<!-- ================= STATUS BAR ================= -->
<div class="a" style="left:0;top:465px;width:600px;height:20px;background:#323232"></div>
<div class="a" style="left:0;top:481px;width:600px;height:4px;background:#2b2b2b"></div>
<svg style="left:6px;top:470px" width="8" height="8" viewBox="0 0 8 8"><rect x="0" y="0" width="1.3" height="8" fill="#6a6a6a"/><path d="M8 0V8L2 4Z" fill="#6a6a6a"/></svg>
<svg style="left:21px;top:470px" width="6" height="8" viewBox="0 0 6 8"><path d="M6 0V8L0 4Z" fill="#6a6a6a"/></svg>
<div class="t" style="left:55px;top:471px;font-size:9px;color:#e0e0e0">1/1</div>
<svg style="left:95px;top:470px" width="6" height="8" viewBox="0 0 6 8"><path d="M0 0V8L6 4Z" fill="#e0e0e0"/></svg>
<svg style="left:108px;top:470px" width="8" height="8" viewBox="0 0 8 8"><path d="M0 0V8L6 4Z" fill="#6a6a6a"/><rect x="6.7" y="0" width="1.3" height="8" fill="#6a6a6a"/></svg>
<svg style="left:121.5px;top:468.5px" width="10.5" height="11.5" viewBox="0 0 10.5 11.5"><path d="M2 10.8H9.8V2" fill="none" stroke="#6a6a6a" stroke-width="1"/><rect x="0.6" y="0.6" width="8.2" height="9.5" rx="0.8" fill="#484848" stroke="#c8c8c8" stroke-width="1.1"/><rect x="2" y="2" width="5.4" height="1.3" fill="#e8e8e8"/><rect x="2" y="4.2" width="5.4" height="4.6" fill="#6a6a6a"/></svg>
<div class="t" style="left:138px;top:470px;font-size:9.5px;color:#f0f0f0;font-weight:bold">拖动</div>
<div class="t" style="left:160px;top:470.5px;font-size:9px;color:#c8c8c8">框选。</div>
<div class="t" style="left:187px;top:470px;font-size:9.5px;color:#f0f0f0;font-weight:bold">单击</div>
<div class="t" style="left:208.5px;top:470.5px;font-size:9px;color:#c8c8c8">对象将其选中。</div>

</body></html>
